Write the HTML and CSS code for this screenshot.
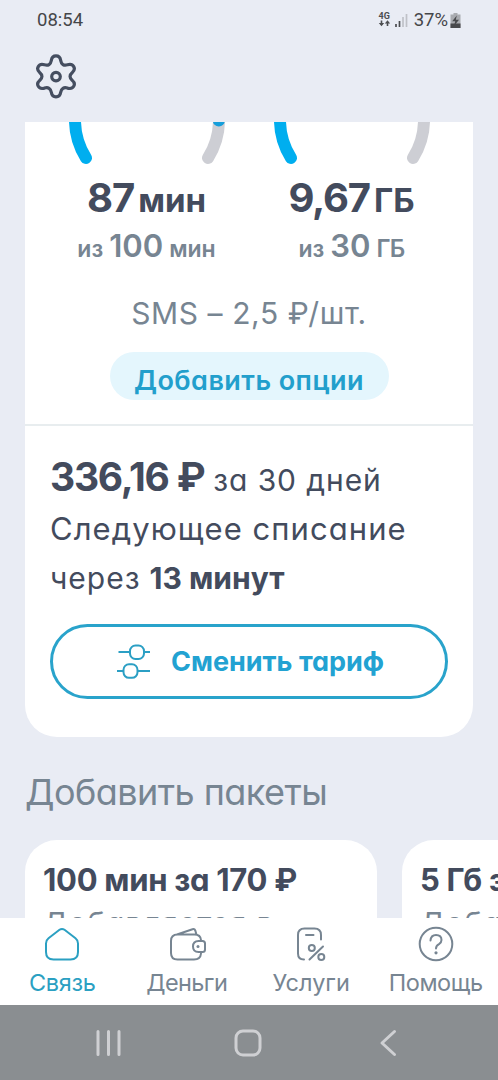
FILE: index.html
```html
<!DOCTYPE html>
<html lang="ru">
<head>
<meta charset="utf-8">
<title>Связь</title>
<link rel="stylesheet" href="styles.css">
</head>
<body>
<div class="screen">
  <header class="status">
    <span class="clock">08:54</span>
    <span class="status-right">
      <svg class="net" width="13" height="18" viewBox="0 0 13 18"><text class="net-label" x="0.5" y="8">4G</text><path d="M3.500 9.500v4M9.500 15v-4" stroke="#4c4d50" stroke-width="1.600"/><path d="M.8 12h5.400L3.500 15.300zM6.800 12.500h5.400L9.500 9.200z" fill="#4c4d50"/></svg>
      <svg class="signal" width="13" height="15" viewBox="0 0 13 15"><path d="M1 11v3M4.500 8v6" stroke="#4c4d50" stroke-width="1.700"/><path d="M8 4v10M11.500 1v13" stroke="#bfc1c7" stroke-width="1.700"/></svg>
      <span class="percent">37%</span>
      <svg class="battery" width="11" height="15" viewBox="0 0 11 15"><path d="M3.500 0h4v1.500H10.500V15H.5V1.500h3z" fill="#a9abb0"/><path d="M.5 10.500h10V15H.5z" fill="#48494c"/><path d="M6.800 2.500 2.200 8.200h3L4 13l5-6.200H5.800z" fill="#48494c"/></svg>
    </span>
  </header>
  <div class="toolbar">
    <svg width="42" height="46" viewBox="0 0 42 46" fill="none" stroke="#454e60" stroke-width="3.200" stroke-linejoin="round"><path d="M16.300 7.500C17.300 1.300 24.700 1.300 25.700 7.500C26.400 11.500 28.800 13 32.500 11.800C38.500 10 41.500 15.800 37.300 19.500C34.300 22 34.300 24.900 37.300 27.400C41.500 31.100 38.500 36.900 32.500 35.100C28.800 33.900 26.400 35.500 25.700 39.300C24.700 45.500 17.300 45.500 16.300 39.300C15.600 35.500 13.200 33.900 9.500 35.100C3.500 36.900 .5 31.100 4.700 27.400C7.700 24.900 7.700 22 4.700 19.500C.5 15.800 3.500 10 9.500 11.800C13.200 13 15.600 11.500 16.300 7.500Z"/><circle cx="21" cy="23.600" r="4.300"/></svg>
  </div>

  <main class="content">
    <section class="tariff">
      <div class="gauges">
        <div class="gauge">
          <svg width="180" height="50" viewBox="0 0 180 50" fill="none" stroke-width="12" stroke-linecap="round"><path d="M162-4A72 72 0 0 1 151 36" stroke="#cdced4"/><path d="M18-4A72 72 0 0 0 29 36" stroke="#00aeef"/><circle cx="161.800" cy="-1.500" r="6" fill="#169fdb"/></svg>
          <div class="amount"><span class="num n87">87</span><span class="unit">мин</span></div>
          <div class="total"><span class="small">из</span><span class="big">100</span><span class="small">мин</span></div>
        </div>
        <div class="gauge">
          <svg width="180" height="50" viewBox="0 0 180 50" fill="none" stroke-width="12" stroke-linecap="round"><path d="M162-4A72 72 0 0 1 151 36" stroke="#cdced4"/><path d="M18-4A72 72 0 0 0 29 36" stroke="#00aeef"/></svg>
          <div class="amount"><span class="num">9,67</span><span class="unit">ГБ</span></div>
          <div class="total"><span class="small">из</span><span class="big">30</span><span class="small caps">ГБ</span></div>
        </div>
      </div>
      <div class="sms">SMS – 2,5 ₽/шт.</div>
      <button class="add">Добавить опции</button>
      <div class="billing">
        <div class="line"><b class="price">336,16 ₽</b><span class="period">за 30 дней</span></div>
        <div class="line next">Следующее списание</div>
        <div class="line due"><span class="through">через</span><b>13 минут</b></div>
        <button class="change">
          <svg width="34" height="36" viewBox="0 0 34 36" fill="none" stroke="#2b9fc4" stroke-width="2"><path d="M1.500 8H13M27 8h6M0 27h6.500M21 27h12"/><rect x="13" y="1.500" width="14" height="13.500" rx="5.500"/><rect x="6.500" y="20.300" width="14" height="13.500" rx="5.500"/></svg>
          <span>Сменить тариф</span>
        </button>
      </div>
    </section>
    <h2 class="heading">Добавить пакеты</h2>
    <div class="packs">
      <article class="pack"><div class="pack-title">100 мин за 170 ₽</div><div class="pack-text">Добавляется в</div></article>
      <article class="pack"><div class="pack-title">5 Гб за 170 ₽</div><div class="pack-text">Добавляется в</div></article>
    </div>
  </main>

  <nav class="tabs">
    <a class="tab active"><svg width="40" height="40" viewBox="0 0 40 40"><path d="M17.500 3.800Q20 2 22.500 3.800L33.500 12.300Q36 14.200 36 17.500V26Q36 33.500 28.500 33.500H11.500Q4 33.500 4 26V17.500Q4 14.200 6.500 12.300Z"/></svg><span class="t1">Связь</span></a>
    <a class="tab"><svg width="40" height="40" viewBox="0 0 40 40"><path d="M34 14Q33.500 8.500 27.500 8.500H10.500Q4 8.500 4 15V27Q4 33.500 10.500 33.500H27Q33.500 33.500 34 27.500M10 8.500 25.500 3.200Q27.500 2.600 28.300 4.500L29.500 8.700M35.500 15H31.500Q26 15 26 20.500Q26 26 31.500 26H35.500Q38 26 38 23.500V17.500Q38 15 35.500 15Z"/><circle class="dot" cx="31" cy="20.500" r="1.500"/></svg><span class="t2">Деньги</span></a>
    <a class="tab"><svg width="40" height="40" viewBox="0 0 40 40"><path d="M13 33.500Q7 33.500 7 27.500V9Q7 2.500 13.500 2.500H23.500Q30 2.500 30 9V13.500M15 9h7.500M32 20.500 18.500 33.500"/><circle cx="20.800" cy="22" r="3"/><circle cx="30.300" cy="31" r="3"/></svg><span class="t3">Услуги</span></a>
    <a class="tab"><svg width="40" height="40" viewBox="0 0 40 40"><circle cx="20" cy="18" r="16.300"/><path d="M14.500 14.500Q15 9 20 9Q25.500 9 25.500 14Q25.500 16.500 23 18.200Q20 20 20 22.500"/><circle class="dot" cx="20" cy="26.800" r="1.600"/></svg><span class="t4">Помощь</span></a>
  </nav>
  <footer class="sysnav">
    <svg width="26" height="26" viewBox="0 0 26 26"><path d="M2 1.500v23M12.500 1.500v23M23 1.500v23"/></svg>
    <svg width="28" height="28" viewBox="0 0 28 28"><rect x="2" y="2" width="24" height="24" rx="7"/></svg>
    <svg width="18" height="28" viewBox="0 0 18 28"><path d="M15.500 2.500 3 14l12.500 11.500"/></svg>
  </footer>
</div>
</body>
</html>
```
FILE: styles.css
```css
* { box-sizing: border-box; }
body { margin: 0; background: #e9ecf4; font-family: Inter, "Open Sans", sans-serif; font-feature-settings: "cv11"; color: #434b5d; }
button { font: inherit; font-feature-settings: inherit; border: 0; padding: 0; }
svg { display: block; flex: none; }
.screen { width: 498px; height: 1080px; display: flex; flex-direction: column; overflow: hidden; }
.status { height: 40px; flex: none; padding: 0 37px 0 37px; display: flex; justify-content: space-between; align-items: center; font: 400 18.500px/38px Roboto, sans-serif; color: #454649; }
.status-right { display: flex; align-items: center; }
.clock { padding-bottom: 1px; }
.net { margin-right: 4px; }
.net-label { font: 700 9px Roboto, sans-serif; fill: #4c4d50; }
.signal { margin-right: 6px; }
.battery { margin-left: 2px; }
.toolbar { height: 82px; flex: none; padding: 13px 35px; }
.content { height: 796px; flex: none; overflow: hidden; padding-left: 25px; }
.tariff { width: 448px; height: 615px; background: #fff; border-radius: 0 0 32px 32px; }
.gauges { display: grid; grid-template-columns: 180px 180px; column-gap: 25px; padding-left: 31.500px; height: 171px; overflow: hidden; }
.amount, .total { display: flex; justify-content: center; align-items: baseline; }
.amount { height: 52.500px; padding-top: 1.500px; line-height: 48px; font-weight: 700; gap: 4px; }
.num { font-size: 40px; letter-spacing: -1.200px; }
.n87 { letter-spacing: -1px; }
.unit { font-size: 33px; font-weight: 700; }
.total { padding-top: 1px; line-height: 40px; color: #778592; font-weight: 600; gap: 6px; }
.total .small { font-size: 23px; }
.total .big { font-size: 31px; }
.total .caps { font-size: 24px; letter-spacing: -.7px; }
.sms { text-align: center; font-size: 30px; letter-spacing: .6px; line-height: 41px; color: #778592; height: 59px; }
.add { display: block; width: 279px; height: 48px; margin: 0 auto; border-radius: 24px; background: #e4f6fd; color: #229fcc; font-weight: 600; font-size: 27px; letter-spacing: .45px; line-height: 48px; padding-top: 5px; }
.billing { margin-top: 24px; border-top: 2px solid #e8edef; padding: 27px 25px 0; }
.line { display: flex; align-items: baseline; height: 48.700px; line-height: 48px; font-size: 30px; gap: 9px; white-space: nowrap; }
.price { font-size: 39px; letter-spacing: -1.250px; }
.period { letter-spacing: .9px; }
.next { font-size: 31px; letter-spacing: 1.050px; padding-top: 3px; }
.due { padding-top: 4px; }
.through { letter-spacing: 1px; }
.change { width: 398px; height: 75px; margin-top: 25px; border: 3px solid #29a3cb; border-radius: 38px; background: #fff; display: flex; align-items: center; padding-left: 64px; gap: 20px; color: #22a2d2; font-size: 27px; font-weight: 700; white-space: nowrap; }
.heading { margin: 31px 0 0; height: 72px; font-size: 36px; letter-spacing: -.55px; line-height: 48px; font-weight: 400; color: #778592; }
.packs { display: flex; gap: 25px; width: 900px; }
.pack { width: 352px; height: 220px; flex: none; background: #fff; border-radius: 32px; padding: 20px 18px; white-space: nowrap; }
.pack-title { font-weight: 700; font-size: 31px; letter-spacing: -.3px; line-height: 40px; }
.pack-text { font-size: 30px; letter-spacing: .9px; line-height: 47px; color: #778592; }
.tabs { height: 87px; flex: none; background: #fff; display: grid; grid-template-columns: repeat(4, 1fr); }
.tab { display: flex; flex-direction: column; align-items: center; padding-top: 8px; font-size: 23.500px; line-height: 33px; color: #778592; }
.tab svg { fill: none; stroke: currentColor; stroke-width: 2; stroke-linecap: round; stroke-linejoin: round; }
.tab .dot { fill: currentColor; stroke: none; }
.t1 { letter-spacing: -.3px; }
.t2 { letter-spacing: -.6px; }
.t4 { letter-spacing: -.4px; }
.active { color: #2ba0c2; }
.sysnav { height: 75px; flex: none; background: #8a8e91; display: flex; align-items: center; padding-left: 96px; }
.sysnav svg { fill: none; stroke: #cfd0d3; stroke-width: 3; stroke-linecap: round; stroke-linejoin: round; }
.sysnav svg + svg { margin-left: 112px; }
.sysnav svg:last-child { margin-left: 116.500px; }
```
